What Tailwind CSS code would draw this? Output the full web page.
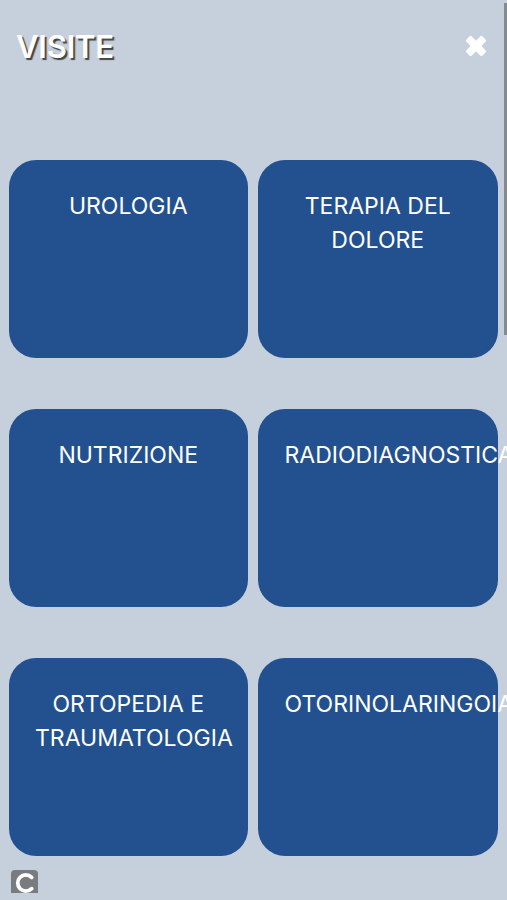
<!doctype html>
<html lang="it">
  <head>
    <meta charset="UTF-8" />
    <meta name="viewport" content="width=device-width, initial-scale=1.0" />
    <title>Visite</title>
    <script src="https://cdn.jsdelivr.net/npm/@tailwindcss/browser@4"></script>
  </head>
  <body class="bg-[#c6d0dc] font-['Inter',sans-serif] text-white">
    <div class="relative h-[900px] overflow-hidden">
      <header class="flex h-[94px] items-center justify-between pl-4 pr-5">
        <h1 class="text-[31px] font-semibold tracking-[-0.2px] [text-shadow:2px_2px_1px_#444]">VISITE</h1>
        <button type="button" aria-label="Chiudi" class="pb-0.5">
          <svg class="size-[22px]" viewBox="0 0 22 22" fill="white" stroke="white" stroke-width="2.6" stroke-linejoin="round">
            <path d="M5.6 2.2L11 7.4L16.4 2.2L19.8 5.6L14.6 11L19.8 16.4L16.4 19.8L11 14.6L5.6 19.8L2.2 16.4L7.4 11L2.2 5.6Z" />
          </svg>
        </button>
      </header>

      <main class="grid grid-cols-[239.5px_239.5px] gap-x-2.5 gap-y-[51.5px] pl-[8.5px] pt-[66px] text-center text-[23px] leading-[34.3px]">
        <a href="#" class="block h-[197.5px] rounded-[27px] bg-[#235190] px-[26.5px] pt-[29.2px]">UROLOGIA</a>
        <a href="#" class="block h-[197.5px] rounded-[27px] bg-[#235190] px-[26.5px] pt-[29.2px]">TERAPIA DEL DOLORE</a>
        <a href="#" class="block h-[197.5px] rounded-[27px] bg-[#235190] px-[26.5px] pt-[29.2px]">NUTRIZIONE</a>
        <a href="#" class="block h-[197.5px] rounded-[27px] bg-[#235190] px-[26.5px] pt-[29.2px]">RADIODIAGNOSTICA</a>
        <a href="#" class="block h-[197.5px] rounded-[27px] bg-[#235190] px-[26.5px] pt-[29.2px]">ORTOPEDIA E TRAUMATOLOGIA</a>
        <a href="#" class="block h-[197.5px] rounded-[27px] bg-[#235190] px-[26.5px] pt-[29.2px]">OTORINOLARINGOIATRIA</a>
      </main>

      <!-- Scrollbar thumb -->
      <div class="absolute right-0 top-[3px] h-[332px] w-[3px] bg-[#858a91]"></div>

      <!-- Badge -->
      <div class="absolute left-[11px] top-[870px] h-[23px] w-[27px] overflow-hidden rounded-t-[4px] bg-[#787c80]">
        <svg class="h-[23px] w-[27px]" viewBox="0 0 27 23" fill="none" stroke="white" stroke-width="3.8" stroke-linecap="round">
          <path d="M20.6 7.3A8.1 8.1 0 1 0 20.6 18.7" />
        </svg>
      </div>
    </div>
  </body>
</html>
